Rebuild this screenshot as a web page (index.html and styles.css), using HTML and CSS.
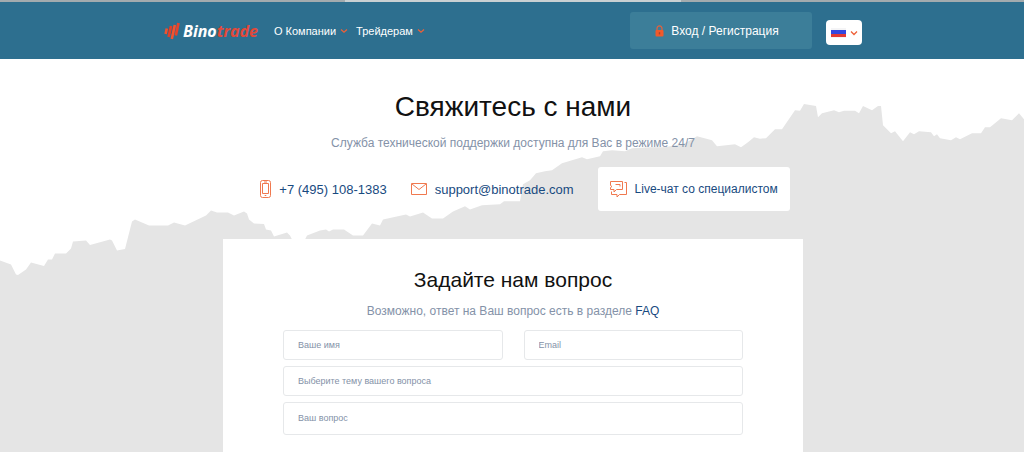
FILE: index.html
```html
<!DOCTYPE html>
<html lang="ru">
<head>
    <meta charset="utf-8">
    <meta name="viewport" content="width=device-width, initial-scale=1">
    <title>Binotrade - Свяжитесь с нами</title>
    <link rel="stylesheet" href="styles.css">
</head>
<body>
    <header class="header">
        <div class="tabs"><span></span><span class="active"></span><span></span></div>
        <div class="header-inner">
            <a class="logo" href="#">
                <svg width="16" height="18" viewBox="0 0 16 18" fill="none">
                    <path d="M6.200 5 4.600 12M10 4 8.200 12" stroke="#94372f" stroke-width="2"/>
                    <path d="M2.800 6.500 1.600 12" stroke="#f0522f" stroke-width="2.600"/>
                    <path d="M7 4 4.600 15" stroke="#e0402b" stroke-width="2.600"/>
                    <path d="M10.800 3 7.800 17" stroke="#f4532f" stroke-width="2.600"/>
                    <path d="M14.500 1 11.800 13.500" stroke="#e5432c" stroke-width="2.800"/>
                </svg>
                <span>Bino<em>trade</em></span>
            </a>
            <nav class="nav">
                <a href="#">О Компании
                    <svg class="chevron" width="8" height="6" viewBox="0 0 8 6"><path d="M1 1.5 4 4.2 7 1.5"/></svg>
                </a>
                <a href="#">Трейдерам
                    <svg class="chevron" width="8" height="6" viewBox="0 0 8 6"><path d="M1 1.5 4 4.2 7 1.5"/></svg>
                </a>
            </nav>
            <a class="login" href="#">
                <svg width="9" height="12" viewBox="0 0 9 12">
                    <path d="M2 6V3.4a2.5 2.5 0 0 1 5 0V6" fill="none" stroke="#e8603a" stroke-width="1.2"/>
                    <rect x="0.5" y="5" width="8" height="6.5" rx="1" fill="#f1592a"/>
                    <path d="M4.5 7.2v2.2" stroke="#a8452f" stroke-width="1.4"/>
                </svg>
                Вход / Регистрация
            </a>
            <button class="lang" type="button" aria-label="Русский">
                <svg width="15" height="10" viewBox="0 0 15 10">
                    <rect width="15" height="10" fill="#f4f4f6"/>
                    <rect y="2" width="15" height="4" fill="#3347e0"/>
                    <rect y="6" width="15" height="3" fill="#e23a35"/>
                </svg>
                <svg class="chevron" width="8" height="6" viewBox="0 0 8 6"><path d="M1 1.5 4 4.5 7 1.5"/></svg>
            </button>
        </div>
    </header>

    <main class="main">
        <!-- Chart silhouette behind the content -->
        <svg class="chart" viewBox="0 59 1024 393" preserveAspectRatio="none" aria-hidden="true">
            <path d="M0 260 11 264 16 274 18 274.5 26 269 31 262 44 265.5 48 259 52 259 55 253 66 253 71 248 73 241 86 240 90 244.5 110 239 112 240 117 250 125 248.5 132 221 135 219 149 225 168 225 174 222 185 225 206 215 211 210 217 212 228 212 234 215 244 211 247 213 249 219 254 223 264 223.5 266 229 271 230 274 236 287 232 290 235 293 241 304 241 307 235 320 230 326 229 329 231 333 229 344 229 353 235 363 235 372 223 380 225 383 219 406 214 410 216 423 212 432 218 443 218 453 211 465 206 470 209 482 205 500 204 504 201 520 201 523 184 530 180 536 173 545 171 552 170 562 163 582 157 587 159 600 156 603 151 612 150 625 151 632 148 650 147 665 147 685 143 697 136 712 140 717 146 735 144 741 147 748 142 754 137 760 138.5 766 138 775 129 782 129 795 110 800 110.5 804 104 816 106 818 117 822 113 834 110 839 112 844 110.5 855 110.5 859 113 863 106 872 110 878 106 881 106 883 125 891 133 895 131 903 141 910 132 914 134 919 131 931 132 934 136 937 134 940 138 951 140 956 137 960 139 972 133 981 133 985 127 990 127 1001 118 1012 120 1019 113 1024 119V452H0Z"/>
        </svg>

        <section class="contacts">
            <h1>Свяжитесь с нами</h1>
            <p class="lead">Служба технической поддержки доступна для Вас в режиме 24/7</p>
            <div class="contacts-row">
                <a class="contact" href="tel:+74951081383">
                    <svg class="icon" width="11" height="18" viewBox="0 0 11 18">
                        <rect x="0.5" y="0.5" width="10" height="17" rx="2"/>
                        <path d="M2.5 3.5h6v10h-6zM4 2h3M4.7 15.5h1.6"/>
                    </svg>
                    +7 (495) 108-1383
                </a>
                <a class="contact" href="mailto:support@binotrade.com">
                    <svg class="icon" width="16" height="12" viewBox="0 0 16 12">
                        <path d="M.5.5h15v11H.5zM1 1l7 5.5L15 1"/>
                    </svg>
                    support@binotrade.com
                </a>
                <button class="chat" type="button">
                    <svg class="icon" width="17" height="17" viewBox="0 0 17 17">
                        <path d="M.5.5h12v8H6.500L4 11V8.500H.5V6.500L2 5.500.5 4.500zM14.500 1.500h2v12h-7L7 16v-2.500H1.500v-3M5.500 3.500h4.500v2"/>
                    </svg>
                    Live-чат со специалистом
                </button>
            </div>
        </section>

        <section class="card">
            <h2>Задайте нам вопрос</h2>
            <p class="lead">Возможно, ответ на Ваш вопрос есть в разделе <a href="#">FAQ</a></p>
            <form class="form">
                <input class="field" type="text" placeholder="Ваше имя" aria-label="Ваше имя">
                <input class="field" type="email" placeholder="Email" aria-label="Email">
                <select class="field wide" aria-label="Выберите тему вашего вопроса">
                    <option>Выберите тему вашего вопроса</option>
                </select>
                <textarea class="field wide" rows="1" placeholder="Ваш вопрос" aria-label="Ваш вопрос"></textarea>
            </form>
        </section>
    </main>
</body>
</html>
```

FILE: styles.css
```css
* {
    box-sizing: border-box;
}

html, body {
    min-height: 100%;
    margin: 0;
}

body {
    display: flex;
    flex-direction: column;
    min-height: 100vh;
    background: #fff;
    font-family: "Liberation Sans", Arial, sans-serif;
    font-size: 12px;
    color: #111;
}

a {
    color: #184a80;
    text-decoration: none;
}

button {
    border: 0;
    font-family: inherit;
    cursor: pointer;
}

svg {
    flex: none;
}

/* Header */
.header {
    background: #2d6f8f;
    color: #fff;
}

.tabs {
    display: grid;
    grid-template-columns: 345fr 336fr 343fr;
    height: 2px;
    background: #a3abae;
}

.tabs .active {
    background: #c9d0d2;
}

.header-inner {
    display: flex;
    align-items: center;
    max-width: 700px;
    height: 57px;
    margin: 0 auto;
    padding-left: 2px;
}

.header a {
    color: #fff;
}

.logo {
    display: flex;
    align-items: center;
    gap: 3px;
    font-family: "Open Sans", sans-serif;
    font-size: 16px;
    font-weight: 700;
    font-style: italic;
}

.header .logo em {
    color: #e2493a;
}

.chevron {
    fill: none;
    stroke: #ee6038;
    stroke-width: 1.3;
}

.nav {
    display: flex;
    gap: 8px;
    margin-left: 16px;
    font-size: 11px;
}

.nav a {
    display: flex;
    align-items: center;
    gap: 4px;
}

.login {
    display: flex;
    align-items: center;
    justify-content: center;
    gap: 7px;
    width: 182px;
    height: 37px;
    margin-left: auto;
    padding-right: 8px;
    border-radius: 3px;
    background: #3c7e99;
}

.lang {
    display: flex;
    align-items: center;
    justify-content: center;
    gap: 4px;
    width: 36px;
    height: 25px;
    margin: 4px 0 0 14px;
    padding: 0;
    border-radius: 4px;
    background: #fff;
}

/* Content */
.main {
    position: relative;
    flex: 1;
    display: flex;
    flex-direction: column;
    align-items: center;
    padding-left: 2px;
}

.chart {
    position: absolute;
    top: 0;
    left: 0;
    width: 100%;
    height: 100%;
    fill: #e5e5e5;
    z-index: -1;
}

h1, h2, .lead {
    margin: 0;
    text-align: center;
}

h1, h2 {
    font-weight: 400;
}

h1 {
    padding-top: 30px;
    font-size: 28px;
    line-height: 36px;
}

h2 {
    font-size: 21px;
    line-height: 24px;
}

.lead {
    color: #8492a8;
    line-height: 16px;
}

.contacts .lead {
    margin-top: 10px;
}

.contacts-row {
    display: flex;
    align-items: center;
    gap: 24px;
    margin-top: 16px;
    padding-left: 24px;
}

.contact, .chat {
    display: flex;
    align-items: center;
    gap: 8px;
    font-size: 13px;
    color: #184a80;
}

.icon {
    fill: none;
    stroke: #f0794f;
    stroke-width: 1;
}

.chat {
    height: 44px;
    padding: 0 12px;
    border-radius: 3px;
    background: #fff;
    font-size: 12px;
}

.card {
    flex: 1;
    width: 100%;
    max-width: 580px;
    margin-top: 28px;
    padding: 29px 60px 18px;
    background: #fff;
}

.card .lead {
    margin-top: 11px;
}

.form {
    display: grid;
    grid-template-columns: 1fr 1fr;
    gap: 6px 21px;
    margin-top: 11px;
}

.field {
    width: 100%;
    height: 30px;
    padding: 0 14px;
    border: 1px solid #e6e8ea;
    border-radius: 3px;
    background: #fff;
    font-family: inherit;
    font-size: 9px;
    color: #8492a8;
    outline: none;
    appearance: none;
}

.field::placeholder {
    color: #8492a8;
}

.wide {
    grid-column: 1 / -1;
}

textarea.field {
    height: 33px;
    padding: 10px 14px;
    line-height: 11px;
    resize: none;
}
```
